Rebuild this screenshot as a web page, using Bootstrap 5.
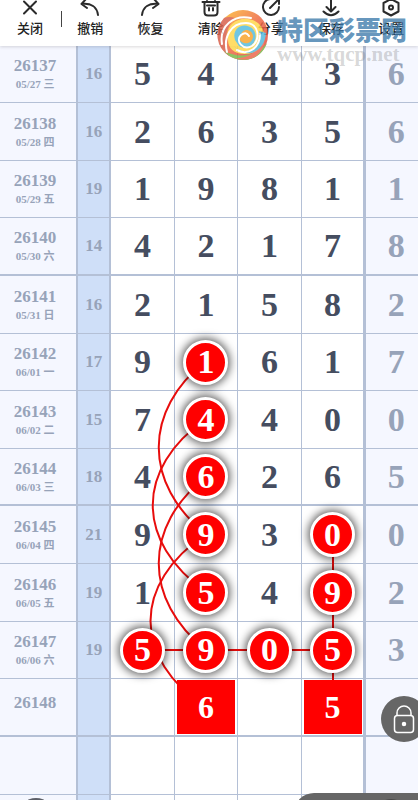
<!DOCTYPE html>
<html lang="zh-CN">
<head>
<meta charset="utf-8">
<meta name="viewport" content="width=device-width, initial-scale=1">
<title>走势图</title>
<link href="https://cdn.jsdelivr.net/npm/bootstrap@5.3.0/dist/css/bootstrap.min.css" rel="stylesheet">
<style>
body { font-family: "Liberation Serif", "Noto Sans CJK SC", serif; background: #fff; }
.toolbar { height: 46px; z-index: 5; box-shadow: 0 1px 3px rgba(90,80,90,.22); font-family: "Noto Sans CJK SC", sans-serif; }
.tool { width: 14.4%; height: 46px; color: #222; font-size: 13px; line-height: 16px; font-weight: 500; }
.tool svg { width: 22px; height: 20px; }
.tool-sep { left: 61px; top: 11px; width: 1px; height: 16px; background: #444; }
.ico { fill: none; stroke: #2b2b2b; stroke-width: 2; stroke-linecap: round; stroke-linejoin: round; }
.brand { left: 217px; top: 9px; z-index: 6; width: 196px; pointer-events: none; }
.brand-logo { width: 52px; height: 52px; opacity: .85; }
.brand-name { font: 900 26px/32px "Noto Sans CJK SC", sans-serif; color: rgba(61,123,171,.8); }
.brand-url { font-size: 21px; line-height: 18px; font-weight: 700; color: rgba(120,120,120,.3); }
.draws { table-layout: fixed; border-collapse: separate; border-spacing: 0; color: #454d60; font-weight: 700; }
.draws th, .draws td { height: 58px; padding: 0; border: 0 solid #b4c0d6; border-width: 0 1px 1px 0; text-align: center; vertical-align: middle; font-size: 34px; line-height: 34px; }
.draws tr.r57 > * { height: 57px; }
.draws tr.thick > * { border-bottom-width: 2px; }
.draws tr > .issue { background: #f5f7ff; color: #97a3b9; border-right-width: 2px; font-size: 17px; line-height: 20px; padding-right: 6px; }
.issue small { display: block; font-size: 11px; line-height: 16px; }
.draws tr > .total { background: #cfdff8; color: #97a3b9; border-right-width: 2px; font-size: 17px; }
.draws tr > :nth-child(6) { border-right-width: 2px; }
.draws tr > .extra { background: #f5f7ff; color: #97a3b9; border-right-width: 0; border-left: 1px solid #b4c0d6; padding-left: 8px; }
.c-issue { width: 18.7%; } .c-total { width: 7.9%; } .c-num { width: 15.2%; }
.ball { width: 45px; height: 45px; border: 3px solid #fff; background: #f00; color: #fff; z-index: 2; box-shadow: 0 0 9px 2px rgba(0,0,0,.62); }
.pick { width: 58px; height: 54px; background: #f00; color: #fff; font-size: 32px; z-index: 2; }
.links { left: 0; top: 0; width: 100%; height: 754px; z-index: 1; pointer-events: none; fill: none; stroke: #e80c0c; stroke-width: 2; }
.lock { right: -9px; top: 696px; width: 46px; height: 46px; background: #666; z-index: 7; }
.sheet { right: -20px; top: 793px; width: 144px; height: 40px; border-radius: 24px; background: #666; z-index: 7; }
.sheet::after { content: ""; position: absolute; left: 80px; top: 6px; width: 34px; height: 34px; border-radius: 50%; background: #4a4a4a; }
.knob { left: 18px; top: 798px; width: 36px; height: 36px; background: #5c5f68; z-index: 7; }
</style>
<script src="https://cdn.jsdelivr.net/npm/bootstrap@5.3.0/dist/js/bootstrap.bundle.min.js"></script>
</head>
<body>
<div class="vh-100 d-flex flex-column overflow-hidden position-relative">
<header class="toolbar bg-white d-flex flex-shrink-0 overflow-hidden position-relative">
  <button type="button" class="tool btn border-0 p-0 flex-shrink-0 d-flex flex-column align-items-center"><svg class="ico" viewBox="0 0 22 20"><path d="M5 1.500L17 13.500M17 1.500L5 13.500"/></svg>关闭</button>
  <button type="button" class="tool btn border-0 p-0 flex-shrink-0 d-flex flex-column align-items-center"><svg class="ico" viewBox="0 0 22 20"><path d="M7-1L2.500 4L8 8M3 4C12 3 18 7 19 15"/></svg>撤销</button>
  <button type="button" class="tool btn border-0 p-0 flex-shrink-0 d-flex flex-column align-items-center"><svg class="ico" viewBox="0 0 22 20"><path d="M15-1L19.500 4L14 8M19 4C10 3 4 7 3 15"/></svg>恢复</button>
  <button type="button" class="tool btn border-0 p-0 flex-shrink-0 d-flex flex-column align-items-center"><svg class="ico" viewBox="0 0 22 20"><path d="M7 0V-3H15V0M2.500 2H19.500M4.500 2V12Q4.500 15.500 8 15.500H14Q17.500 15.500 17.500 12V2M9 8V10.500M13 8V10.500M7 5.500H15"/></svg>清除</button>
  <button type="button" class="tool btn border-0 p-0 flex-shrink-0 d-flex flex-column align-items-center"><svg class="ico" viewBox="0 0 22 20"><path d="M10-1A8 8 0 1 0 19 7M10 8L19-1M14-1H19V4"/></svg>分享</button>
  <button type="button" class="tool btn border-0 p-0 flex-shrink-0 d-flex flex-column align-items-center"><svg class="ico" viewBox="0 0 22 20"><path d="M11-2V11M6.500 7L11 11.500L15.500 7M3.500 11.500Q11 19 18.500 11.500"/></svg>保存</button>
  <button type="button" class="tool btn border-0 p-0 flex-shrink-0 d-flex flex-column align-items-center"><svg class="ico" viewBox="0 0 22 20"><path d="M11-1L18.500 3V11.500L11 15.500L3.500 11.500V3Z"/><circle cx="11" cy="7.500" r="2"/></svg>设置</button>
  <span class="tool-sep position-absolute"></span>
</header>

<div class="brand position-absolute d-flex">
  <svg class="brand-logo flex-shrink-0" viewBox="0 0 52 52">
    <defs><linearGradient id="rim" x1="0" y1="0" x2="1" y2="1"><stop offset="0" stop-color="#ffc52e"/><stop offset=".5" stop-color="#ef6b45"/><stop offset="1" stop-color="#d9433f"/></linearGradient></defs>
    <circle cx="26" cy="26" r="25" fill="url(#rim)"/>
    <path d="M7 9A25 25 0 0 0 12 47C8 32 7 20 18 9Q12 7 7 9Z" fill="#d8614d"/>
    <path d="M7 42A25 25 0 0 0 50 34C40 47 22 50 7 42Z" fill="#79b94b"/>
    <path d="M18 49C34 50 49 38 45 17Q53 37 38 48Q28 53 18 49Z" fill="#ed6850"/>
    <path d="M11 31C7 13 27 4 41 14C54 25 44 46 28 45C17 45 11 39 11 31Z" fill="#ffd84d"/>
    <path d="M17 37C29 50 46 37 42 22L49 24C48 42 30 52 17 37Z" fill="#55b9dc"/>
    <path d="M18 31C14 18 28 12 36 20C44 31 32 43 22 37Z" fill="#56bddd"/>
    <path d="M24 27C24 19 35 19 36 27C36 35 26 37 22 30Z" fill="#f8a52f"/>
    <path d="M5 35C2 17 17 5 34 9M10 43C6 28 14 14 29 14C42 14 44 31 35 37C26 42 18 32 24 26Q29 22 32 27M20 41C31 47 43 39 43 25" fill="none" stroke="#fff" stroke-width="2" stroke-linecap="round"/>
  </svg>
  <div class="ps-2 pt-1 text-nowrap">
    <div class="brand-name">特区彩票网</div>
    <div class="brand-url">www.tqcp.net</div>
  </div>
</div>

<main class="flex-grow-1 position-relative">
<table class="draws w-100">
<colgroup><col class="c-issue"><col class="c-total"><col class="c-num"><col class="c-num"><col class="c-num"><col class="c-num"><col></colgroup>
<tbody>
<tr class="r57"><th scope="row" class="issue">26137<small>05/27 三</small></th><td class="total">16</td><td>5</td><td>4</td><td>4</td><td>3</td><td class="extra">6</td></tr>
<tr><th scope="row" class="issue">26138<small>05/28 四</small></th><td class="total">16</td><td>2</td><td>6</td><td>3</td><td>5</td><td class="extra">6</td></tr>
<tr class="r57"><th scope="row" class="issue">26139<small>05/29 五</small></th><td class="total">19</td><td>1</td><td>9</td><td>8</td><td>1</td><td class="extra">1</td></tr>
<tr class="thick"><th scope="row" class="issue">26140<small>05/30 六</small></th><td class="total">14</td><td>4</td><td>2</td><td>1</td><td>7</td><td class="extra">8</td></tr>
<tr><th scope="row" class="issue">26141<small>05/31 日</small></th><td class="total">16</td><td>2</td><td>1</td><td>5</td><td>8</td><td class="extra">2</td></tr>
<tr class="r57"><th scope="row" class="issue">26142<small>06/01 一</small></th><td class="total">17</td><td>9</td><td><span class="ball rounded-circle d-flex align-items-center justify-content-center mx-auto position-relative">1</span></td><td>6</td><td>1</td><td class="extra">7</td></tr>
<tr><th scope="row" class="issue">26143<small>06/02 二</small></th><td class="total">15</td><td>7</td><td><span class="ball rounded-circle d-flex align-items-center justify-content-center mx-auto position-relative">4</span></td><td>4</td><td>0</td><td class="extra">0</td></tr>
<tr class="r57 thick"><th scope="row" class="issue">26144<small>06/03 三</small></th><td class="total">18</td><td>4</td><td><span class="ball rounded-circle d-flex align-items-center justify-content-center mx-auto position-relative">6</span></td><td>2</td><td>6</td><td class="extra">5</td></tr>
<tr><th scope="row" class="issue">26145<small>06/04 四</small></th><td class="total">21</td><td>9</td><td><span class="ball rounded-circle d-flex align-items-center justify-content-center mx-auto position-relative">9</span></td><td>3</td><td><span class="ball rounded-circle d-flex align-items-center justify-content-center mx-auto position-relative">0</span></td><td class="extra">0</td></tr>
<tr><th scope="row" class="issue">26146<small>06/05 五</small></th><td class="total">19</td><td>1</td><td><span class="ball rounded-circle d-flex align-items-center justify-content-center mx-auto position-relative">5</span></td><td>4</td><td><span class="ball rounded-circle d-flex align-items-center justify-content-center mx-auto position-relative">9</span></td><td class="extra">2</td></tr>
<tr class="r57"><th scope="row" class="issue">26147<small>06/06 六</small></th><td class="total">19</td><td><span class="ball rounded-circle d-flex align-items-center justify-content-center mx-auto position-relative">5</span></td><td><span class="ball rounded-circle d-flex align-items-center justify-content-center mx-auto position-relative">9</span></td><td><span class="ball rounded-circle d-flex align-items-center justify-content-center mx-auto position-relative">0</span></td><td><span class="ball rounded-circle d-flex align-items-center justify-content-center mx-auto position-relative">5</span></td><td class="extra">3</td></tr>
<tr class="thick"><th scope="row" class="issue pb-2">26148</th><td class="total"></td><td></td><td><span class="pick d-flex align-items-center justify-content-center mx-auto position-relative">6</span></td><td></td><td><span class="pick d-flex align-items-center justify-content-center mx-auto position-relative">5</span></td><td class="extra"></td></tr>
<tr><th class="issue"></th><td class="total"></td><td></td><td></td><td></td><td></td><td class="extra"></td></tr>
<tr><th class="issue"></th><td class="total"></td><td></td><td></td><td></td><td></td><td class="extra"></td></tr>
</tbody>
</table>
<svg class="links position-absolute" viewBox="0 46 418 754" preserveAspectRatio="none">
  <path d="M206 361C143 410 143 484 206 534"/>
  <path d="M206 419C135 468 135 542 206 592"/>
  <path d="M206 477C143 526 143 600 206 650"/>
  <path d="M206 534C132 584 132 658 206 708"/>
  <path d="M143 650H333M333 534V708"/>
</svg>
</main>

<button type="button" class="lock btn border-0 p-0 rounded-circle position-absolute" aria-label="锁定"><svg width="46" height="46" viewBox="0 0 46 46" fill="none" stroke="#fff" stroke-width="1.500"><rect x="13.500" y="19.500" width="19" height="17" rx="3"/><path d="M16 19V17A7 7 0 0 1 30 17V19"/><circle cx="23" cy="28" r="1.500" fill="#fff"/></svg></button>
<div class="sheet position-absolute"></div>
<div class="knob rounded-circle position-absolute"></div>
</div>
</body>
</html>
